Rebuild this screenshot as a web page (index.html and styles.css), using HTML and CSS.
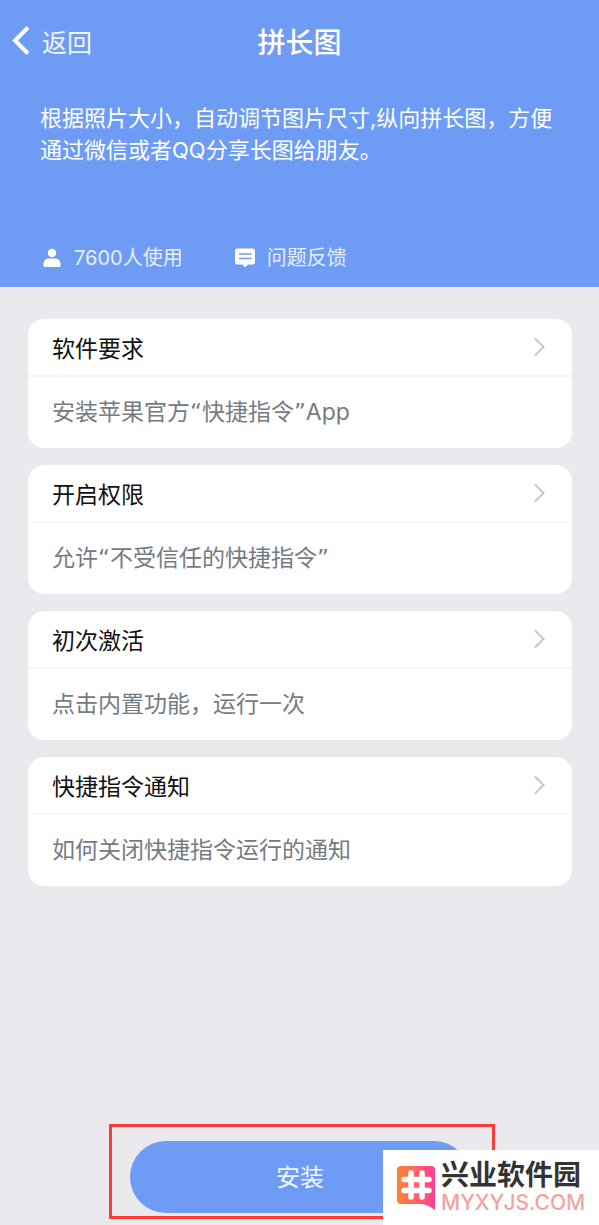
FILE: index.html
```html
<!DOCTYPE html>
<html lang="zh-CN">
<head>
<meta charset="utf-8">
<meta name="viewport" content="width=device-width, initial-scale=1">
<title>拼长图</title>
<link rel="stylesheet" href="styles.css">
</head>
<body>
<div class="page">
  <header class="hero">
    <nav class="nav">
      <a class="back" href="#">
        <svg class="back-icon" viewBox="0 0 17 29" aria-hidden="true"><path d="M15.500 1.500 2.500 14.500l13 13"/></svg>
        <span>返回</span>
      </a>
      <h1 class="title">拼长图</h1>
    </nav>
    <p class="intro">根据照片大小，自动调节图片尺寸,纵向拼长图，方便通过微信或者QQ分享长图给朋友。</p>
    <div class="meta">
      <span class="meta-item">
        <svg class="meta-icon" viewBox="0 0 20 20" aria-hidden="true"><circle cx="10" cy="5" r="4.200"/><path d="M1.500 18v-2.500C1.500 12.500 4 10.500 7 10.500h6c3 0 5.500 2 5.500 5V18c0 .700-.500 1-1 1h-15c-.500 0-1-.300-1-1z"/></svg>
        <span>7600人使用</span>
      </span>
      <a class="meta-item" href="#">
        <svg class="meta-icon" viewBox="0 0 20 20" aria-hidden="true"><path d="M2.500.500h15A2.500 2.500 0 0 1 20 3v11a2.500 2.500 0 0 1-2.500 2.500H13L10.200 19.500 7.500 16.500h-5A2.500 2.500 0 0 1 0 14V3A2.500 2.500 0 0 1 2.500.500z"/><path class="cut" d="M4 6h12.500M4 10.500h12.500"/></svg>
        <span>问题反馈</span>
      </a>
    </div>
  </header>
  <main class="cards">
    <a class="card" href="#">
      <h2 class="card-head">软件要求<svg class="chevron" viewBox="0 0 12 20" aria-hidden="true"><path d="m2 1.500 8.500 8.500L2 18.500"/></svg></h2>
      <p class="card-text">安装苹果官方<span class="quote">“</span>快捷指令<span class="quote">”</span>App</p>
    </a>
    <a class="card" href="#">
      <h2 class="card-head">开启权限<svg class="chevron" viewBox="0 0 12 20" aria-hidden="true"><path d="m2 1.500 8.500 8.500L2 18.500"/></svg></h2>
      <p class="card-text">允许<span class="quote">“</span>不受信任的快捷指令<span class="quote">”</span></p>
    </a>
    <a class="card" href="#">
      <h2 class="card-head">初次激活<svg class="chevron" viewBox="0 0 12 20" aria-hidden="true"><path d="m2 1.500 8.500 8.500L2 18.500"/></svg></h2>
      <p class="card-text">点击内置功能，运行一次</p>
    </a>
    <a class="card" href="#">
      <h2 class="card-head">快捷指令通知<svg class="chevron" viewBox="0 0 12 20" aria-hidden="true"><path d="m2 1.500 8.500 8.500L2 18.500"/></svg></h2>
      <p class="card-text">如何关闭快捷指令运行的通知</p>
    </a>
  </main>
  <footer class="actions">
    <div class="highlight"><button class="install" type="button">安装</button></div>
  </footer>
  <aside class="brand">
    <svg class="brand-logo" viewBox="0 0 38 44" aria-hidden="true">
      <defs><linearGradient id="brand-fill" x1="0" x2="1"><stop offset="0" stop-color="#ff8536"/><stop offset="1" stop-color="#ff3f94"/></linearGradient></defs>
      <path fill="url(#brand-fill)" d="M4 0h30q4 0 4 4v40q-7-5-13-6H4q-4 0-4-4V4q0-4 4-4z"/>
      <path class="hash" d="M14 7v24M25 7v24M7 13.500h25M7 24.500h25"/>
    </svg>
    <div class="brand-words">
      <span class="brand-name">兴业软件园</span>
      <span class="brand-url">MYXYJS.COM</span>
    </div>
  </aside>
</div>
</body>
</html>
```
FILE: styles.css
```css
* { box-sizing: border-box; }
body {
  margin: 0;
  font-family: Inter, "Noto Sans CJK SC", sans-serif;
  background: #e9e9ee;
}
h1, h2, p { margin: 0; }
a { color: inherit; text-decoration: none; }
svg { display: block; flex: none; }

.page {
  position: relative;
  min-height: 100vh;
  display: flex;
  flex-direction: column;
}

.hero {
  display: flex;
  flex-direction: column;
  padding-bottom: 13px;
  color: #fff;
  background: #6e9cf5;
}
.nav {
  display: grid;
  grid-template-columns: 1fr auto 1fr;
  align-items: center;
  height: 81px;
  padding: 0 12px;
}
.back {
  display: flex;
  align-items: center;
  gap: 12px;
  color: #f1f5fe;
  font-size: 25px;
}
.back-icon { width: 18px; height: 29px; fill: none; stroke: #fff; stroke-width: 4; }
.title { font-size: 28px; font-weight: 500; }
.intro {
  padding: 21px 40px 0;
  font-size: 22px;
  line-height: 32px;
}
.meta {
  display: flex;
  align-items: center;
  gap: 52px;
  margin-top: 76px;
  padding: 0 42px;
  color: #e6eefd;
  font-size: 20px;
  line-height: 32px;
}
.meta-item { display: flex; align-items: center; gap: 12px; }
.meta-icon { width: 20px; height: 20px; fill: #fff; }
.cut { fill: none; stroke: #6e9cf5; stroke-width: 1.5; }

.cards {
  display: flex;
  flex-direction: column;
  gap: 17px;
  padding: 32px 27px 32px 28px;
}
.card {
  overflow: hidden;
  border-radius: 16px;
  background: #fff;
  font-size: 23px;
}
.card-head {
  display: flex;
  align-items: center;
  justify-content: space-between;
  height: 58px;
  padding: 0 27px 0 24px;
  border-bottom: 2px solid #f6f6f7;
  color: #111;
  font-size: 23px;
  font-weight: 400;
}
.chevron { width: 12px; height: 20px; fill: none; stroke: #c6c6c8; stroke-width: 2; }
.card-text {
  padding: 0 24px;
  color: #757b83;
  line-height: 71px;
}
.quote { font-family: "DejaVu Sans", sans-serif; }

.actions {
  display: flex;
  justify-content: center;
  margin-top: auto;
  padding: 0 0 6px 5px;
}
.highlight {
  display: flex;
  width: 386px;
  padding: 14px 22px 3px 18px;
  border: 3px solid #ff3a3a;
}
.install {
  flex: 1;
  height: 72px;
  padding: 0 0 3px;
  border: 0;
  border-radius: 36px;
  color: #f1f5fe;
  background: #6e9cf5;
  font-family: inherit;
  font-size: 24px;
}

.brand {
  position: absolute;
  right: 0;
  bottom: 0;
  display: flex;
  align-items: center;
  gap: 6px;
  width: 216px;
  height: 75px;
  padding-left: 14px;
  background: #fff;
}
.brand-logo { width: 38px; height: 44px; }
.hash { fill: none; stroke: #fff; stroke-width: 5.500; stroke-linecap: round; }
.brand-words { display: flex; flex-direction: column; }
.brand-name {
  color: #333;
  font-size: 28px;
  font-weight: 700;
  line-height: 30px;
}
.brand-url {
  color: #f2a3a3;
  font-size: 21px;
  font-weight: 500;
  line-height: 26px;
}
```
